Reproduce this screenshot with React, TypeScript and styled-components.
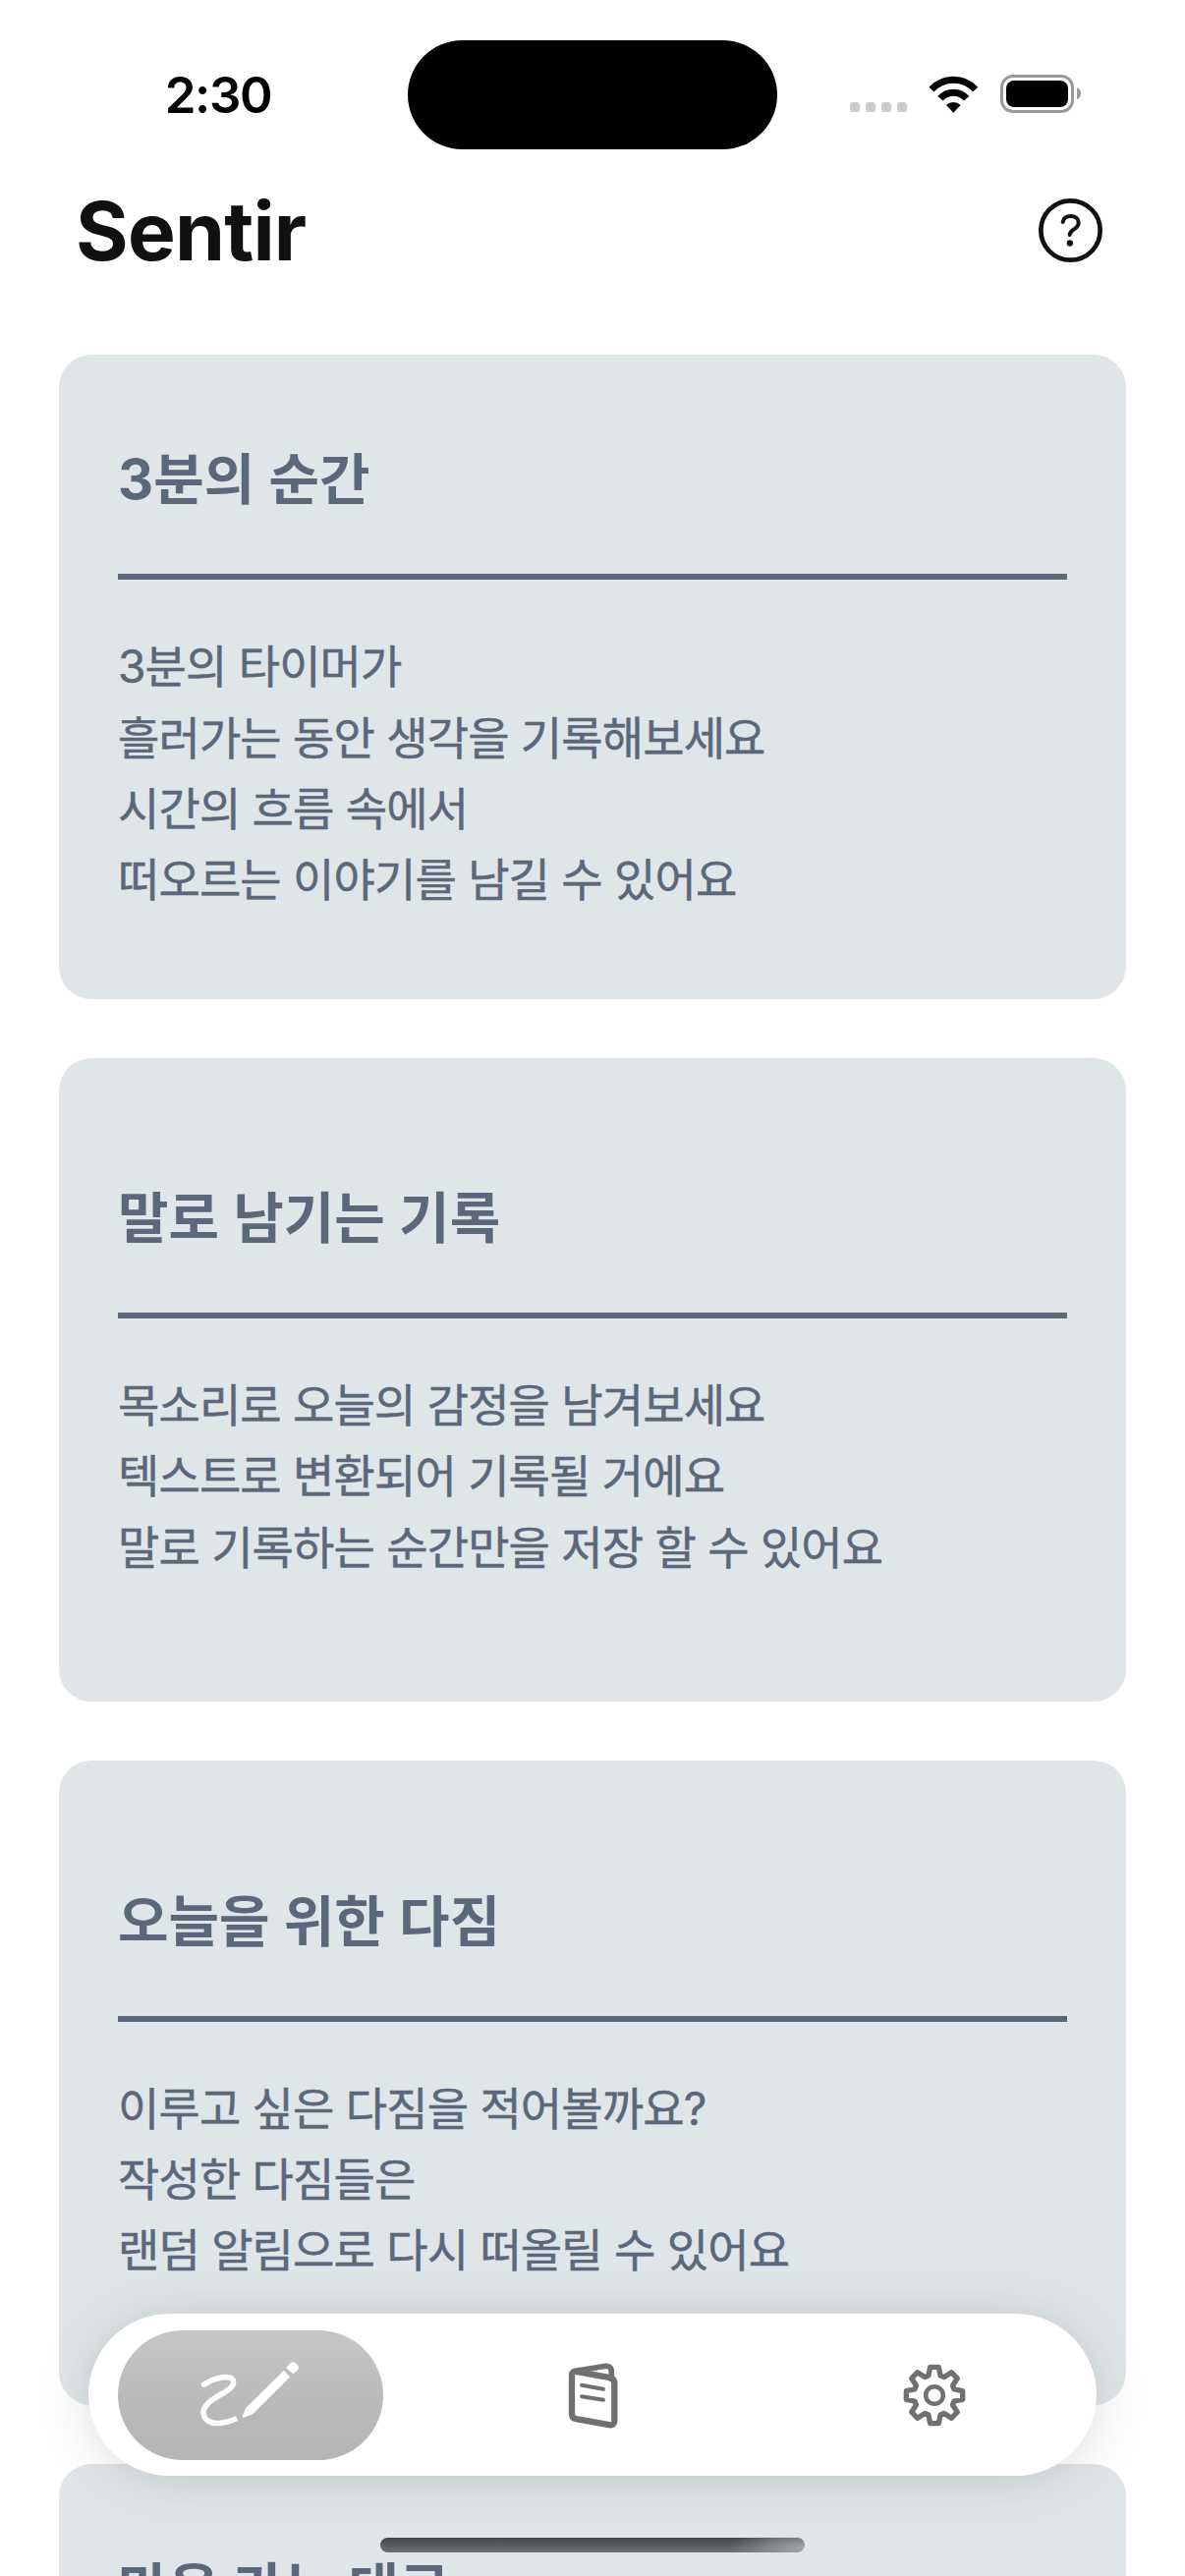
import React from "react";
import styled, { createGlobalStyle } from "styled-components";

const GlobalStyle = createGlobalStyle`
  *, *::before, *::after { box-sizing: border-box; }
  body {
    margin: 0;
    background: #ffffff;
    font-family: Inter, "Noto Sans CJK KR", sans-serif;
  }
  h1, h2, p { margin: 0; }
  button { border: 0; padding: 0; background: none; font: inherit; }
  svg { display: block; }
`;

const Screen = styled.div`
  position: relative;
  width: 1206px;
  height: 2622px;
  overflow: hidden;
  background: #ffffff;
`;

const StatusBar = styled.div`
  display: grid;
  grid-template-columns: 415px 376px 415px;
  align-items: center;
  height: 152px;
  padding-top: 41px;
`;

const Clock = styled.div`
  padding-left: 29px;
  text-align: center;
  font-size: 51px;
  line-height: 60px;
  font-weight: 600;
  letter-spacing: -1.4px;
  color: #000000;
`;

const Island = styled.div`
  height: 111px;
  border-radius: 56px;
  background: #000000;
`;

const StatusIcons = styled.div`
  display: flex;
  align-items: center;
  gap: 22px;
  padding-left: 74px;
  height: 39px;
  margin-top: -2px;
`;

const CellDots = styled.div`
  display: flex;
  align-self: flex-end;
  gap: 6px;
  padding-bottom: 1px;
`;

const CellDot = styled.span`
  width: 10px;
  height: 10px;
  border-radius: 3px;
  background: #cccccc;
`;

const Header = styled.header`
  display: flex;
  align-items: center;
  justify-content: space-between;
  height: 165px;
  padding: 0 84px 0 77px;
`;

const AppName = styled.h1`
  padding-top: 3px;
  font-size: 82px;
  line-height: 98px;
  font-weight: 700;
  letter-spacing: -0.8px;
  color: #111111;
`;

const CardList = styled.main`
  display: flex;
  flex-direction: column;
  gap: 60px;
  padding: 44px 60px 0;
`;

const CardBox = styled.section`
  display: flex;
  flex: none;
  flex-direction: column;
  justify-content: center;
  height: 655.67px;
  padding: 1px 60px 0;
  border-radius: 33px;
  background: #e0e6e8;
  color: #5b677b;
`;

const CardTitle = styled.h2`
  font-size: 56px;
  line-height: 82px;
  font-weight: 700;
  letter-spacing: 0;
  word-spacing: 1px;
  white-space: nowrap;
`;

const CardRule = styled.div`
  height: 6px;
  margin: 55px 0 52px;
  background: #5b677b;
`;

const CardBody = styled.div<{ $rows: number }>`
  min-height: ${(p) => p.$rows * 72.33}px;
  font-size: 46px;
  line-height: 72.33px;
  font-weight: 400;
  -webkit-text-stroke: 0.5px currentColor;
  letter-spacing: -0.87px;
  word-spacing: 0.2px;
  white-space: nowrap;
`;

const BottomOverlay = styled.div`
  position: absolute;
  left: 0;
  right: 0;
  bottom: 0;
  display: flex;
  flex-direction: column;
  align-items: center;
  gap: 63px;
  padding-bottom: 24px;
`;

const TabBar = styled.nav`
  display: flex;
  align-items: center;
  justify-content: space-between;
  width: 1026px;
  height: 165px;
  padding: 0 30px;
  border-radius: 83px;
  background: #ffffff;
  box-shadow: 0 3px 54px rgba(0, 0, 0, 0.14);
`;

const Tab = styled.button<{ $active?: boolean }>`
  display: flex;
  align-items: center;
  justify-content: center;
  width: 270px;
  height: 132px;
  border-radius: 66px;
  color: ${(p) => (p.$active ? "#ffffff" : "#707070")};
  background: ${(p) => (p.$active ? "linear-gradient(#c6c6c6, #b9b9b9 60%, #b5b5b5)" : "none")};
`;

const HomeIndicator = styled.div`
  width: 432px;
  height: 15px;
  border-radius: 8px;
  background:
    radial-gradient(ellipse 76px 24px at 100% 75%, rgba(165, 170, 171, 0.95), rgba(150, 155, 156, 0) 100%),
    linear-gradient(#444849, #6e7273);
`;

const WifiIcon = () => (
  <svg width="51" height="38" viewBox="375 108 153 114">
    <g fill="none" stroke="#000000" strokeWidth="21">
      <path d="M384 150.4 A91 91 0 0 1 518 150.4" />
      <path d="M411 178 A52.5 52.5 0 0 1 491 178" />
    </g>
    <path d="M429 198 A31 31 0 0 1 473 198 L451 221 Z" fill="#000000" />
  </svg>
);

const BatteryIcon = () => (
  <svg width="82" height="39" viewBox="0 0 82 39">
    <rect x="1.5" y="1.5" width="72" height="36" rx="11.5" fill="none" stroke="#999999" strokeWidth="3" />
    <rect x="6" y="6" width="63" height="27" rx="8" fill="#000000" />
    <path d="M78 13.2 C80.6 14.2 82 16.6 82 19.2 C82 21.8 80.6 24.2 78 25.2 Z" fill="#999999" />
  </svg>
);

const HelpIcon = () => (
  <svg width="65" height="65" viewBox="711 486 195 195">
    <circle cx="808.5" cy="583.5" r="90.5" fill="none" stroke="#111111" strokeWidth="14" />
    <path
      d="M785 558 C787 546 797 540 809 540 C823 540 833 548 833 560 C833 570 827 575 819 580 C810 586 806 590 806 597"
      fill="none"
      stroke="#111111"
      strokeWidth="12"
      strokeLinecap="round"
    />
    <circle cx="806.5" cy="622.5" r="9.5" fill="#111111" />
  </svg>
);

const ScribbleIcon = () => (
  <svg width="130" height="110" viewBox="0 7.5 390 330">
    <path
      d="M56 138 C82 122 104 117 121 117 C146 118 151 138 128 155 C104 173 51 193 51 225 C52 250 74 259 98 258 C118 257 138 250 153 243"
      fill="none"
      stroke="currentColor"
      strokeWidth="17"
    />
    <circle cx="53" cy="139.5" r="8.5" fill="currentColor" />
    <path
      d="M297 97 L315 117 L207 225 C203 229 198 231 193 233 L177 240 C172 242 169 239 171 234 L179 216 C181 211 183 208 187 205 Z"
      fill="currentColor"
    />
    <path d="M304 89 L313 77 Q323 67 334 75 Q347 86 338 97 L325 107 Z" fill="currentColor" />
  </svg>
);

const JournalIcon = () => (
  <svg width="90" height="90" viewBox="-6 7.5 270 270">
    <g fill="none" stroke="currentColor" strokeLinejoin="round" strokeLinecap="round">
      <path
        d="M79 70 L182 89 Q196 92 196 106 L196 220 Q196 236 180 233 L79 215 Q66 212 66 200 L66 82 Q66 68 79 70 Z"
        strokeWidth="19"
      />
      <path d="M82 68 L165 54 Q187 50 187 72 L187 92" strokeWidth="17" />
      <path d="M96 112 L162 124 M96 146 L162 157" strokeWidth="12" />
    </g>
  </svg>
);

const gearOutline = Array.from({ length: 8 }, (_, tooth) =>
  [
    [-17, 63],
    [-8.5, 87],
    [8.5, 87],
    [17, 63],
  ].map(([offset, radius]) => {
    const angle = ((tooth * 45 + offset) * Math.PI) / 180;
    return `${(radius * Math.sin(angle)).toFixed(1)},${(-radius * Math.cos(angle)).toFixed(1)}`;
  })
)
  .flat()
  .join(" ");

const GearIcon = () => (
  <svg width="64" height="64" viewBox="-96 -96 192 192">
    <g fill="none" stroke="currentColor" strokeLinejoin="round">
      <polygon points={gearOutline} strokeWidth="16" />
      <circle r="26.5" strokeWidth="13.5" />
    </g>
  </svg>
);

type CardData = { title: string; rows: number; lines: string[] };

const cards: CardData[] = [
  {
    title: "3분의 순간",
    rows: 4,
    lines: ["3분의 타이머가", "흘러가는 동안 생각을 기록해보세요", "시간의 흐름 속에서", "떠오르는 이야기를 남길 수 있어요"],
  },
  {
    title: "말로 남기는 기록",
    rows: 3,
    lines: ["목소리로 오늘의 감정을 남겨보세요", "텍스트로 변환되어 기록될 거에요", "말로 기록하는 순간만을 저장 할 수 있어요"],
  },
  {
    title: "오늘을 위한 다짐",
    rows: 3,
    lines: ["이루고 싶은 다짐을 적어볼까요?", "작성한 다짐들은", "랜덤 알림으로 다시 떠올릴 수 있어요"],
  },
  { title: "마음 가는 대로", rows: 4, lines: [] },
];

const Card = ({ title, rows, lines }: CardData) => (
  <CardBox>
    <CardTitle>{title}</CardTitle>
    <CardRule />
    <CardBody $rows={rows}>
      {lines.map((line) => (
        <p key={line}>{line}</p>
      ))}
    </CardBody>
  </CardBox>
);

export default function App() {
  return (
    <>
      <GlobalStyle />
      <Screen>
        <StatusBar>
          <Clock>2:30</Clock>
          <Island />
          <StatusIcons>
            <CellDots>
              <CellDot />
              <CellDot />
              <CellDot />
              <CellDot />
            </CellDots>
            <WifiIcon />
            <BatteryIcon />
          </StatusIcons>
        </StatusBar>
        <Header>
          <AppName>Sentir</AppName>
          <button>
            <HelpIcon />
          </button>
        </Header>
        <CardList>
          {cards.map((card) => (
            <Card key={card.title} {...card} />
          ))}
        </CardList>
        <BottomOverlay>
          <TabBar>
            <Tab $active>
              <ScribbleIcon />
            </Tab>
            <Tab>
              <JournalIcon />
            </Tab>
            <Tab>
              <GearIcon />
            </Tab>
          </TabBar>
          <HomeIndicator />
        </BottomOverlay>
      </Screen>
    </>
  );
}
